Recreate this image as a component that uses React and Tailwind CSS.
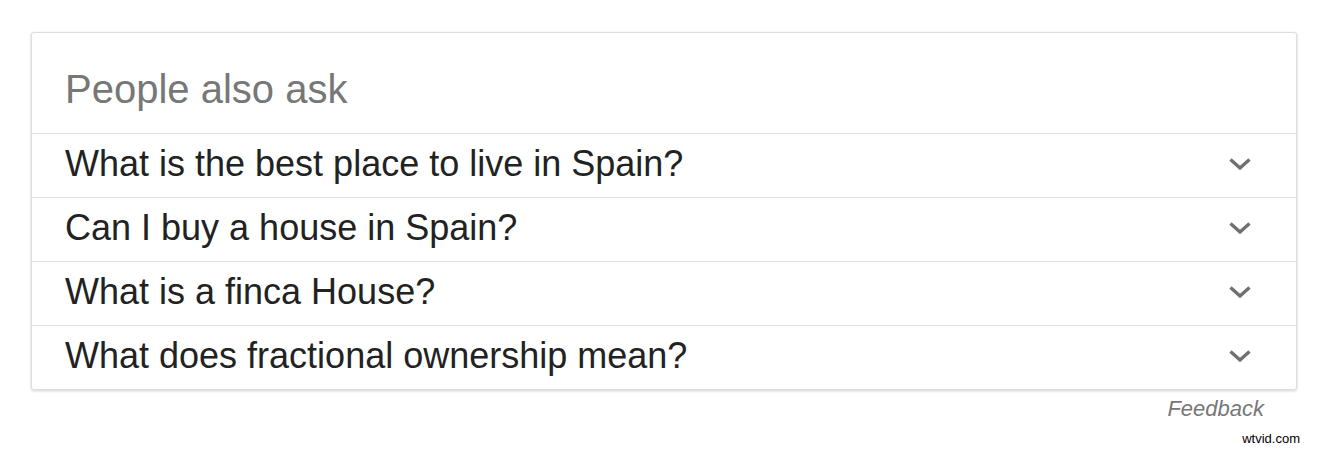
const questions = [
  'What is the best place to live in Spain?',
  'Can I buy a house in Spain?',
  'What is a finca House?',
  'What does fractional ownership mean?',
]

function Chevron() {
  return (
    <svg width="24" height="14" viewBox="0 0 24 14" fill="none" className="flex-shrink-0">
      <path d="M2.5 2.5 L12 11 L21.5 2.5" stroke="#707070" strokeWidth="3.3" />
    </svg>
  )
}

export default function App() {
  return (
    <div className="w-[1324px] h-[450px] bg-white font-['Liberation_Sans',Arial,sans-serif] overflow-hidden">
      <div className="ml-[31px] mt-[32px] w-[1266px] bg-white border border-[#dedede] rounded-[3px] shadow-[0_1px_3px_rgba(0,0,0,0.18)]">
        {/* Header */}
        <div className="h-[100px] pt-[33px] pl-[33px]">
          <h2 className="text-[40px] leading-[46px] text-[#777]">People also ask</h2>
        </div>

        {/* Questions */}
        {questions.map(q => (
          <div key={q} className="h-[64px] border-t border-[#e2e2e2] pl-[33px] pr-[44px] flex items-start justify-between">
            <span className="pt-[10px] text-[36px] leading-[40px] text-[#222]">{q}</span>
            <div className="pt-[23px]">
              <Chevron />
            </div>
          </div>
        ))}
      </div>

      {/* Feedback */}
      <div className="w-[1264px] mt-[7px] flex justify-end">
        <span className="text-[22px] leading-[24px] italic text-[#777]">Feedback</span>
      </div>

      <div className="mt-[10px] pr-[24px] flex justify-end">
        <span className="text-[13px] leading-[16px] text-black">wtvid.com</span>
      </div>
    </div>
  )
}
